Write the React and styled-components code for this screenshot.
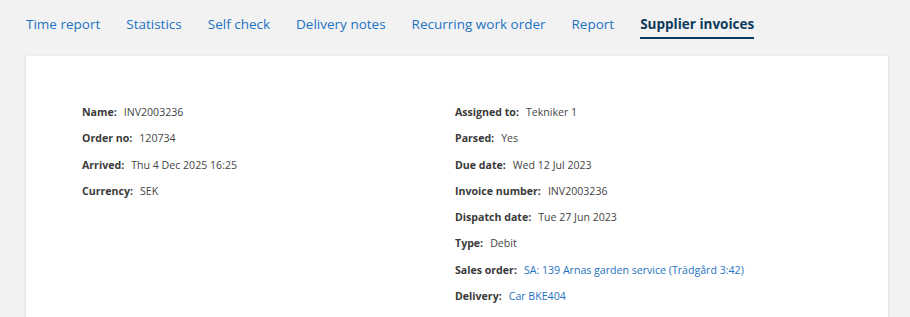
import React from "react";
import styled, { createGlobalStyle } from "styled-components";

const GlobalStyle = createGlobalStyle`
  html, body {
    margin: 0;
    padding: 0;
    background: #f2f2f2;
    font-family: "Open Sans", "Liberation Sans", sans-serif;
  }
`;

const Page = styled.div`
  padding: 0 22px 0 26px;
  height: 317px;
  overflow: hidden;
`;

const TabMenu = styled.nav`
  display: flex;
  gap: 26px;
  padding-top: 15px;
  margin-bottom: 17px;
`;

const Tab = styled.div`
  font-size: 13.5px;
  line-height: 19px;
  padding-bottom: 3px;
  cursor: pointer;
  color: ${(p) => (p.$active ? "#0c3a5c" : "#1d72c2")};
  font-weight: ${(p) => (p.$active ? 700 : 400)};
  border-bottom: 2px solid ${(p) => (p.$active ? "#0c3a5c" : "transparent")};
`;

const Card = styled.section`
  background: #fff;
  box-shadow: 0 1px 3px rgba(0, 0, 0, 0.14);
  padding: 48px 60px 40px 56px;
  display: grid;
  grid-template-columns: 1fr 1fr;
`;

const Column = styled.div`
  display: flex;
  flex-direction: column;
  gap: 10.3px;
`;

const Row = styled.div`
  font-size: 10.6px;
  line-height: 16px;
  color: #444;
  display: flex;
  gap: 7px;
`;

const Label = styled.span`
  font-weight: 700;
  color: #3a3a3a;
`;

const Link = styled.a`
  color: #1d72c2;
  text-decoration: none;
  cursor: pointer;
`;

const tabs = [
  "Time report",
  "Statistics",
  "Self check",
  "Delivery notes",
  "Recurring work order",
  "Report",
  "Supplier invoices",
];

const left = [
  ["Name:", "INV2003236"],
  ["Order no:", "120734"],
  ["Arrived:", "Thu 4 Dec 2025 16:25"],
  ["Currency:", "SEK"],
];

const right = [
  ["Assigned to:", "Tekniker 1"],
  ["Parsed:", "Yes"],
  ["Due date:", "Wed 12 Jul 2023"],
  ["Invoice number:", "INV2003236"],
  ["Dispatch date:", "Tue 27 Jun 2023"],
  ["Type:", "Debit"],
  ["Sales order:", "SA: 139 Arnas garden service (Trädgård 3:42)", true],
  ["Delivery:", "Car BKE404", true],
];

function Field({ label, value, link }) {
  return (
    <Row>
      <Label>{label}</Label>
      {link ? <Link>{value}</Link> : <span>{value}</span>}
    </Row>
  );
}

export default function App() {
  return (
    <>
      <GlobalStyle />
      <Page>
        <TabMenu>
          {tabs.map((t) => (
            <Tab key={t} $active={t === "Supplier invoices"}>
              {t}
            </Tab>
          ))}
        </TabMenu>
        <Card>
          <Column>
            {left.map(([l, v]) => (
              <Field key={l} label={l} value={v} />
            ))}
          </Column>
          <Column>
            {right.map(([l, v, link]) => (
              <Field key={l} label={l} value={v} link={link} />
            ))}
          </Column>
        </Card>
      </Page>
    </>
  );
}
